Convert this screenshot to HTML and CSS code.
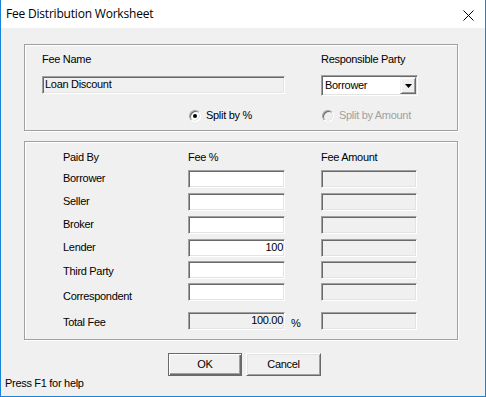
FILE: index.html
```html
<!DOCTYPE html>
<html lang="en">
<head>
<meta charset="utf-8">
<title>Fee Distribution Worksheet</title>
<link rel="stylesheet" href="styles.css">
</head>
<body>
<div class="window">
  <div class="titlebar">
    <span class="title">Fee Distribution Worksheet</span>
    <svg class="close" width="11" height="11" viewBox="0 0 11 11" aria-label="Close">
      <path d="M0.5 0.5 L10.5 10.5 M10.5 0.5 L0.5 10.5" stroke="#000" stroke-width="1" fill="none"/>
    </svg>
  </div>
  <div class="client">
    <div class="group group--fee">
      <div class="fee-grid">
        <div class="label">Fee Name</div>
        <div class="label">Responsible Party</div>
        <div class="field field--disabled field--name">Loan Discount</div>
        <div class="combo">
          <span class="combo__value">Borrower</span>
          <span class="combo__btn">
            <svg width="7" height="4" viewBox="0 0 7 4"><path d="M0 0 H7 L3.5 4 Z" fill="#000"/></svg>
          </span>
        </div>
        <div class="radio radio--pct"><span class="radio__circle radio__circle--checked"></span>Split by %</div>
        <div class="radio radio--disabled radio--amt"><span class="radio__circle"></span>Split by Amount</div>
      </div>
    </div>

    <div class="group group--dist">
      <div class="dist-grid">
        <div class="label">Paid By</div>
        <div class="label">Fee %</div>
        <div></div>
        <div class="label">Fee Amount</div>

        <div class="label label--row">Borrower</div>
        <div class="field"></div>
        <div></div>
        <div class="field field--disabled"></div>

        <div class="label label--row">Seller</div>
        <div class="field"></div>
        <div></div>
        <div class="field field--disabled"></div>

        <div class="label label--row">Broker</div>
        <div class="field"></div>
        <div></div>
        <div class="field field--disabled"></div>

        <div class="label label--row">Lender</div>
        <div class="field field--num">100</div>
        <div></div>
        <div class="field field--disabled"></div>

        <div class="label label--third">Third Party</div>
        <div class="field"></div>
        <div></div>
        <div class="field field--disabled"></div>

        <div class="label label--corr">Correspondent</div>
        <div class="field"></div>
        <div></div>
        <div class="field field--disabled"></div>

        <div class="label label--total">Total Fee</div>
        <div class="field field--disabled field--num">100.00</div>
        <div class="label label--pct">%</div>
        <div class="field field--disabled"></div>
      </div>
    </div>

    <div class="buttons">
      <div class="btn btn--default">OK</div>
      <div class="btn btn--cancel">Cancel</div>
    </div>
    <div class="status">Press F1 for help</div>
  </div>
</div>
</body>
</html>
```

FILE: styles.css
```css
* { box-sizing: border-box; }

html, body {
  margin: 0;
  padding: 0;
  background: #ffffff;
}

body {
  font-family: "Liberation Sans", Arial, sans-serif;
  font-size: 11px;
  line-height: 13px;
  letter-spacing: -0.3px;
  color: #000;
}

.window {
  width: 486px;
  height: 397px;
  border-left: 1px solid #1883d7;
  border-right: 1px solid #1883d7;
  border-bottom: 1px solid #1883d7;
  display: flex;
  flex-direction: column;
  background: #f0f0f0;
}

.titlebar {
  height: 28px;
  flex: none;
  background: #fff;
  display: flex;
  align-items: flex-start;
  justify-content: space-between;
  padding: 0 11px 0 5px;
}

.title {
  font-family: "Open Sans", "Noto Sans", sans-serif;
  font-size: 12px;
  letter-spacing: -0.2px;
  line-height: 16px;
  padding-top: 6px;
  color: #000;
}

.close {
  display: block;
  margin-top: 10px;
}

.client {
  flex: 1;
  background: #f0f0f0;
  padding: 16px 0 0 0;
  display: flex;
  flex-direction: column;
}

.group {
  margin-left: 23px;
  width: 434px;
  border: 1px solid #a0a0a0;
  box-shadow: 1px 1px 0 #fff, inset 1px 1px 0 #fff;
}

.group--fee {
  padding: 8px 0 8px 17px;
}

.group--dist {
  margin-top: 10px;
  padding: 9px 0 9px 38px;
}

.fee-grid {
  display: grid;
  grid-template-columns: 243px 97px;
  grid-template-rows: 22px 34px 13px;
  column-gap: 36px;
  align-items: start;
}

.label {
  white-space: nowrap;
}

.field {
  height: 18px;
  border: 1px solid;
  border-color: #a0a0a0 #fff #fff #a0a0a0;
  box-shadow: inset 1px 1px 0 #696969, inset -1px -1px 0 #e3e3e3;
  background: #fff;
  padding: 1px 2px;
  white-space: nowrap;
  overflow: hidden;
}

.field--disabled {
  background: #f0f0f0;
}

.field--name {
  margin-top: 1px;
}

.field--num {
  text-align: right;
  padding-right: 1px;
}

.combo {
  width: 97px;
  height: 21px;
  border: 1px solid;
  border-color: #a0a0a0 #fff #fff #a0a0a0;
  box-shadow: inset 1px 1px 0 #696969, inset -1px -1px 0 #e3e3e3;
  background: #fff;
  display: flex;
  align-items: stretch;
  padding: 1px;
}

.combo__value {
  flex: 1;
  padding: 2px 0 0 2px;
}

.combo__btn {
  width: 16px;
  flex: none;
  background: #f0f0f0;
  border: 1px solid;
  border-color: #f0f0f0 #696969 #696969 #f0f0f0;
  box-shadow: inset 1px 1px 0 #fff, inset -1px -1px 0 #a0a0a0;
  display: flex;
  align-items: center;
  justify-content: center;
}

.combo__btn svg {
  display: block;
}

.radio {
  display: flex;
  align-items: center;
  gap: 5px;
  white-space: nowrap;
}

.radio--pct {
  padding-left: 147px;
}

.radio--amt {
  padding-left: 1px;
}

.radio--disabled {
  color: #a0a0a0;
}

.radio__circle {
  width: 12px;
  height: 12px;
  flex: none;
  border-radius: 50%;
  border: 1px solid;
  border-color: #a0a0a0 #fff #fff #a0a0a0;
  box-shadow: inset 1px 1px 0 #696969, inset -1px -1px 0 #e3e3e3;
  background: #fff;
  display: flex;
  align-items: center;
  justify-content: center;
}

.radio--disabled .radio__circle {
  background: #f0f0f0;
}

.radio__circle--checked::after {
  content: "";
  width: 4px;
  height: 4px;
  border-radius: 50%;
  background: #000;
}

.dist-grid {
  display: grid;
  grid-template-columns: 125px 97px 36px 96px;
  grid-template-rows: 19px 23px 23px 23px 22px 22px 29px 18px;
  align-items: start;
}

.label--row {
  padding-top: 2px;
}

.label--third {
  padding-top: 4px;
}

.label--corr {
  padding-top: 7px;
}

.label--total {
  padding-top: 4px;
}

.label--pct {
  padding: 5px 0 0 6px;
}

.buttons {
  display: flex;
  gap: 4px;
  margin: 13px 0 0 167px;
}

.btn {
  height: 23px;
  display: flex;
  align-items: center;
  justify-content: center;
  background: #f0f0f0;
  border: 1px solid;
  border-color: #fff #696969 #696969 #fff;
  box-shadow: inset 1px 1px 0 #e3e3e3, inset -1px -1px 0 #a0a0a0;
}

.btn--default {
  width: 74px;
  border-color: #696969;
  box-shadow: inset 1px 1px 0 #fff, inset -1px -1px 0 #696969, inset -2px -2px 0 #a0a0a0;
}

.btn--cancel {
  width: 75px;
}

.status {
  margin-top: 1px;
  padding-left: 4px;
  font-size: 11px;
}
```
